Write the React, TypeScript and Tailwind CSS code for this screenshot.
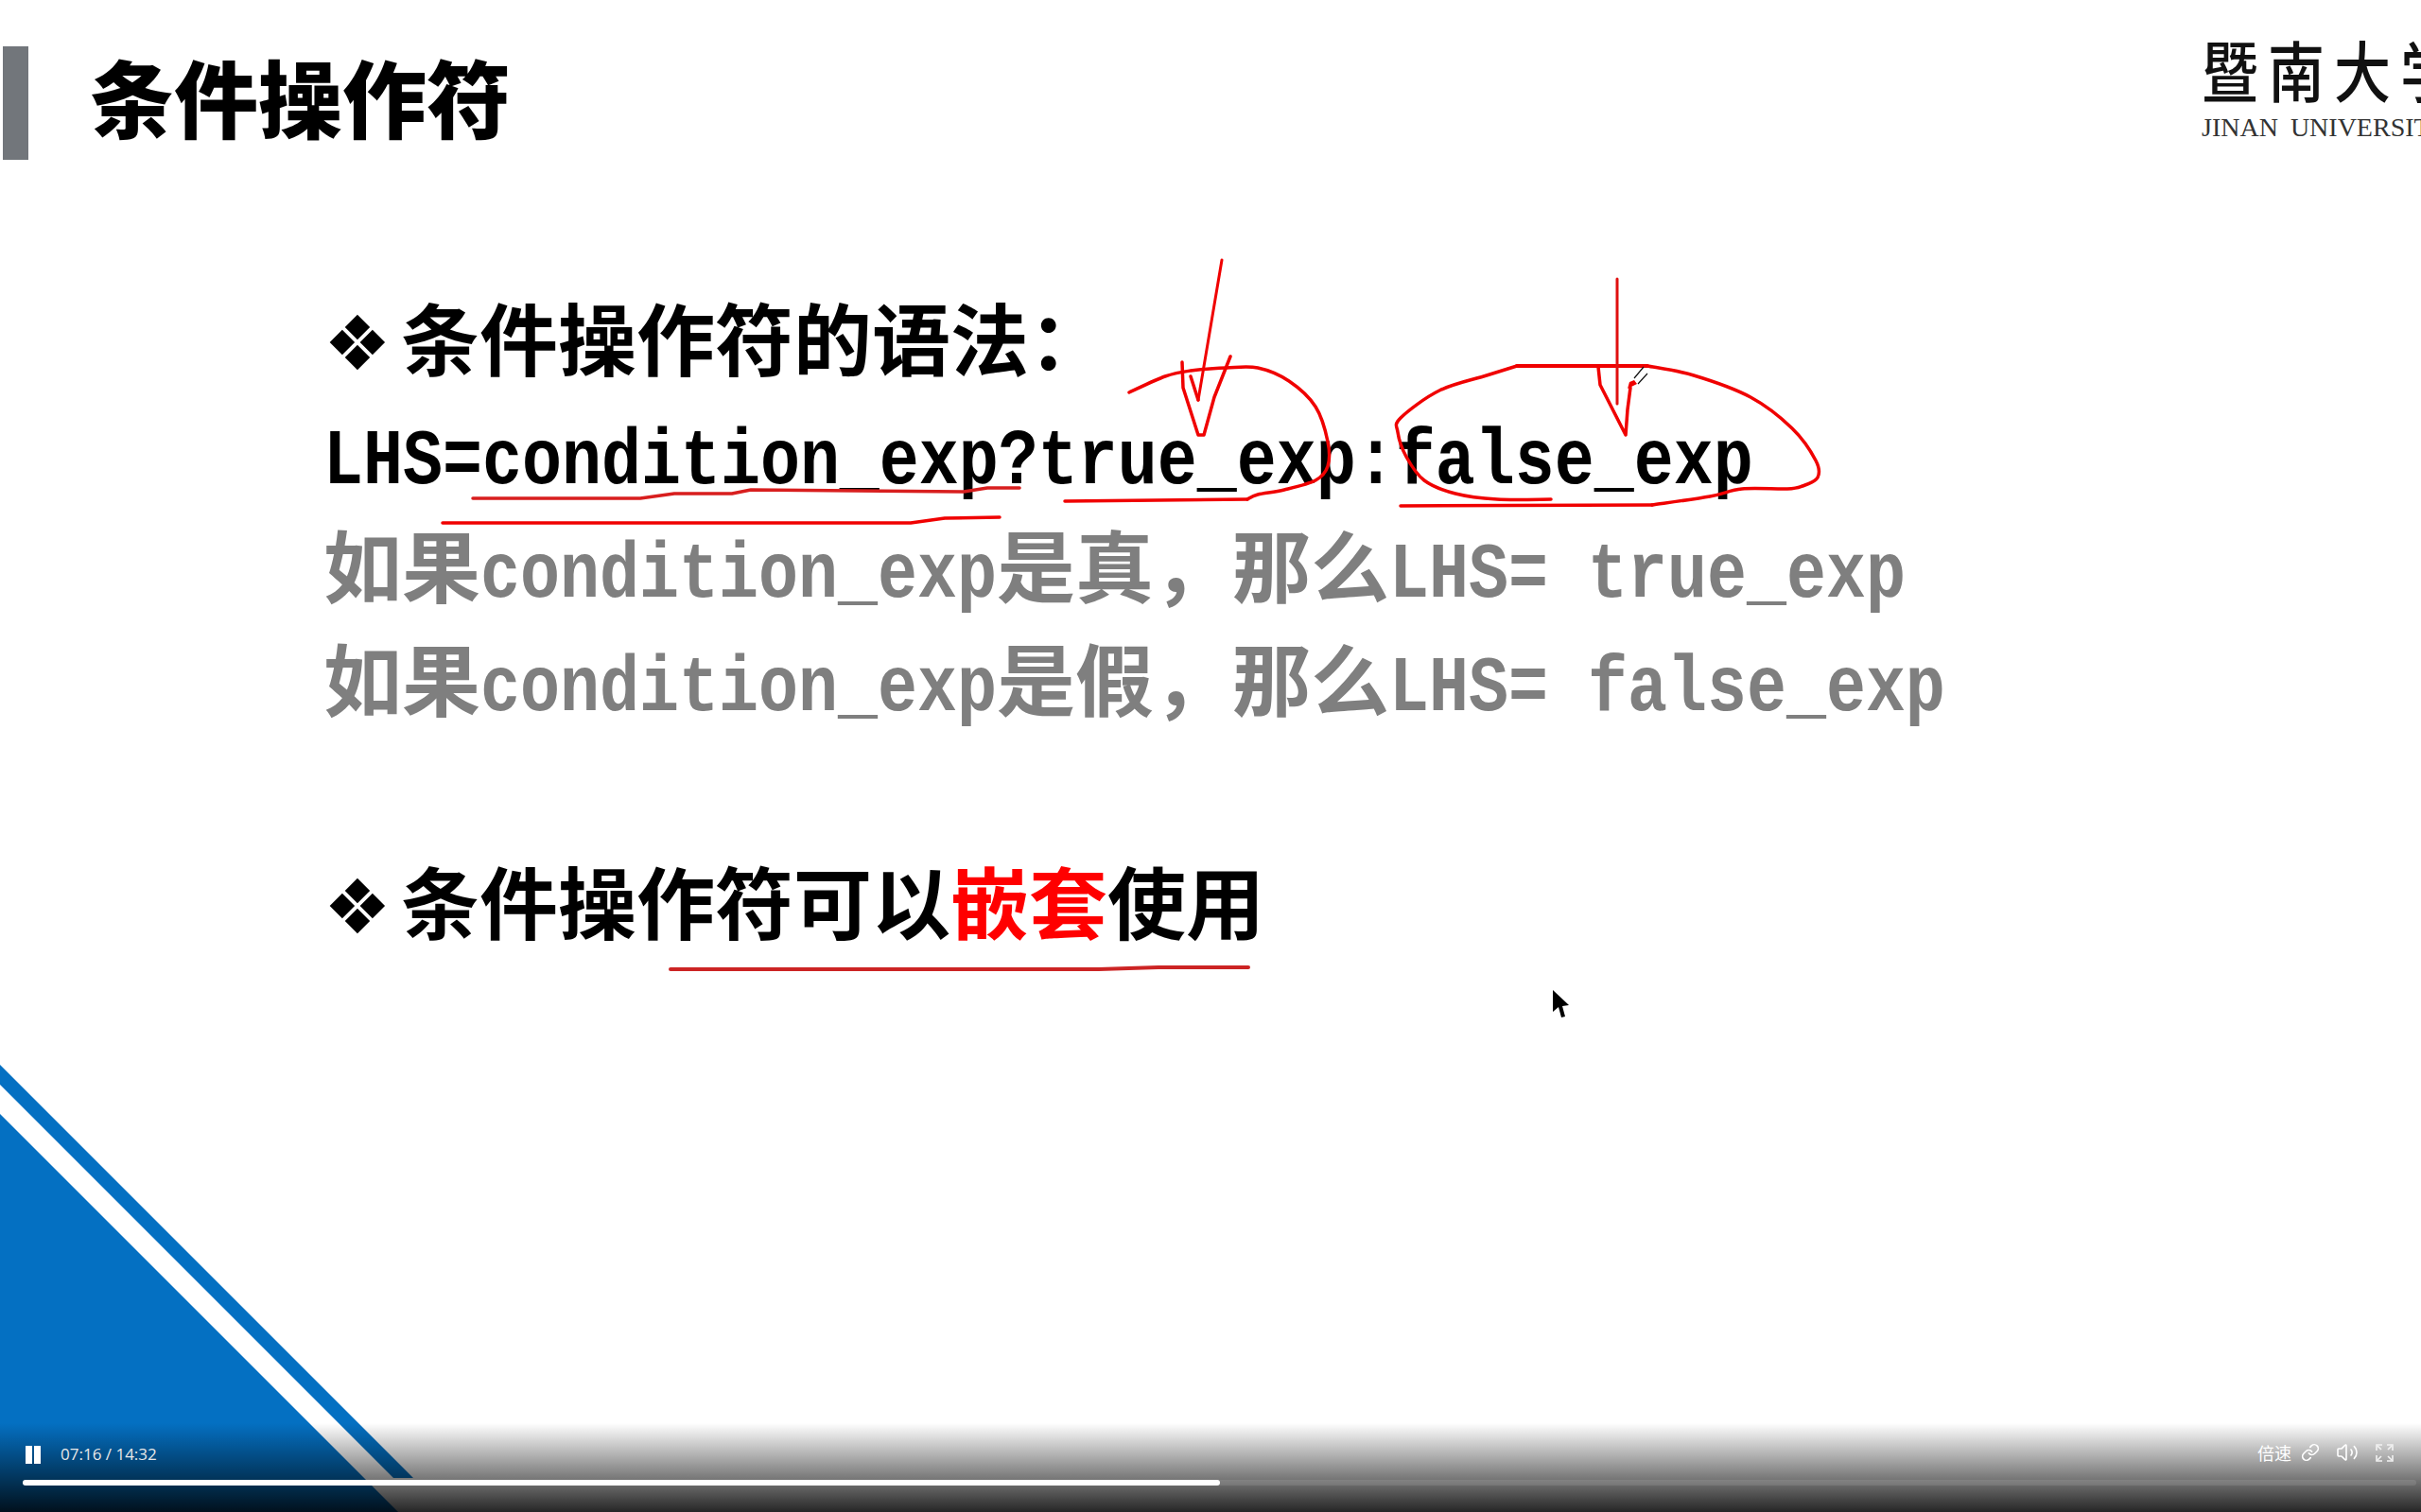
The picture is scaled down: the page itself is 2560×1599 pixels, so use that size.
import { Link, Volume2 } from "lucide-react";

const cjk = "font-['Noto_Sans_CJK_SC',sans-serif]";

// catmull-rom through the hand picked points, so pen strokes do not look like polygons
const smooth = (pts: number[][]) => {
  let d = `M${pts[0][0]} ${pts[0][1]}`;
  for (let i = 0; i < pts.length - 1; i++) {
    const p0 = pts[i - 1] ?? pts[i];
    const p1 = pts[i];
    const p2 = pts[i + 1];
    const p3 = pts[i + 2] ?? p2;
    const c1x = p1[0] + (p2[0] - p0[0]) / 6;
    const c1y = p1[1] + (p2[1] - p0[1]) / 6;
    const c2x = p2[0] - (p3[0] - p1[0]) / 6;
    const c2y = p2[1] - (p3[1] - p1[1]) / 6;
    d += `C${c1x} ${c1y} ${c2x} ${c2y} ${p2[0]} ${p2[1]}`;
  }
  return d;
};

const circleOne = [
  [1194, 415], [1232, 398], [1259, 392], [1297, 389], [1330, 389], [1363, 403], [1391, 430],
  [1404, 467], [1404, 493], [1391, 508], [1358, 518], [1330, 523], [1319, 528],
];
const circleTwo = [
  [1640, 528], [1583, 528], [1539, 522], [1506, 508], [1487, 483], [1478, 457], [1481, 442],
  [1522, 413], [1572, 397], [1604, 387],
];
const circleTwoEnd = [
  [1742, 387], [1791, 397], [1851, 420], [1895, 453], [1920, 487], [1922, 505], [1906, 514],
  [1890, 517], [1842, 517], [1808, 525], [1747, 534],
];

// half-width text: the slide font is narrow, 42px per character
const Mono = ({ children }: { children: string }) => (
  <span
    className="inline-block origin-left scale-x-[0.833] whitespace-pre font-['Liberation_Mono',monospace] text-[84px] font-bold"
    style={{ width: children.length * 42 }}
  >
    {children}
  </span>
);

const Bullet = () => (
  <span className="w-[82px] font-['DejaVu_Sans',sans-serif] text-[80px] leading-[120px] text-black">❖</span>
);

const InkLayer = () => (
  <svg className="absolute inset-0 pointer-events-none" width="2560" height="1599" viewBox="0 0 2560 1599" fill="none">
    <g stroke="#f00000" strokeWidth="3.5" strokeLinecap="round" strokeLinejoin="round">
      <path d="M500 527L677 527L713 522L774 522L794 518L1019 520L1044 516L1078 516" stroke="#d81e1e" />
      <path d="M468 553L963 553L999 548L1057 547" />
      <path d="M1292 275L1267 423" strokeWidth="3" />
      <path d="M1250 383L1251 410L1267 460L1273 460L1284 420L1301 377" />
      <path d="M1259 398L1267 423" />
      <path d={smooth(circleOne)} />
      <path d="M1319 528L1126 530" />
      <path d={smooth(circleTwo)} />
      <path d="M1604 387L1742 387" strokeWidth="4" />
      <path d={smooth(circleTwoEnd)} />
      <path d="M1747 534L1481 535" />
      <path d="M1710 295L1710 427" strokeWidth="3" stroke="#e01010" />
      <path d="M1690 388L1692 407L1719 460L1721 433L1724 410" />
      <path d="M709 1025L1162 1025L1225 1023L1320 1023" stroke="#cc2424" strokeWidth="4" />
    </g>
    {/* pen cursor */}
    <path d="M1728 400L1738 388M1732 406L1742 395" stroke="#111" strokeWidth="1.2" />
    <polygon points="1721,411 1723,404 1728,402 1731,406" fill="#f00000" />
    {/* mouse pointer */}
    <path d="M1642 1047L1642 1070L1648 1065L1651 1076L1655 1075L1652 1064L1659 1063Z" fill="#000" />
  </svg>
);

const SlideCorner = () => (
  <svg className="absolute inset-0 pointer-events-none" width="2560" height="1599" viewBox="0 0 2560 1599">
    <polygon points="0,1178 421,1599 0,1599" fill="#0470c2" />
    <polygon points="0,1126 437,1563 416,1563 0,1147" fill="#0470c2" />
  </svg>
);

const FullscreenIcon = () => (
  <svg width="19" height="19" viewBox="0 0 19 19" fill="none" stroke="#f2f2f2" strokeWidth="1.6">
    <path d="M7 1H1V7M12 1H18V7M18 12V18H12M7 18H1V12" />
    <path d="M2 2L6 6M17 2L13 6M17 17L13 13M2 17L6 13" />
  </svg>
);

const PlayerBar = () => (
  <div className="absolute bottom-0 left-0 right-0 h-[94px] bg-linear-to-b from-transparent to-black/85">
    <div className="flex h-[60px] items-end justify-between pb-[17px] pl-[27px] pr-[29px] text-[17px] leading-[20px] text-[#e8e8e8]">
      <div className="flex items-center gap-[21px]">
        <div className="flex gap-[2px]">
          <div className="h-[19px] w-[7px] bg-white" />
          <div className="h-[19px] w-[7px] bg-white" />
        </div>
        <span className="font-['Open_Sans',sans-serif]">07:16 / 14:32</span>
      </div>
      <div className="flex items-center text-white">
        <span className={`text-[18px] ${cjk}`}>倍速</span>
        <Link className="ml-[10px] h-[20px] w-[20px]" strokeWidth={2} />
        <Volume2 className="ml-[17px] h-[24px] w-[24px]" strokeWidth={1.6} />
        <div className="ml-[18px] flex">
          <FullscreenIcon />
        </div>
      </div>
    </div>
    <div className="ml-[24px] mr-[5px] h-[6px] rounded-full bg-white/10">
      <div className="h-full w-[1266px] rounded-full bg-white" />
    </div>
  </div>
);

export default function App() {
  return (
    <div className={`relative h-[1599px] w-[2560px] overflow-hidden bg-white text-black ${cjk}`}>
      <SlideCorner />

      <header className="flex h-[169px] items-start justify-between">
        <div className="flex items-start">
          <div className="ml-[3px] mt-[49px] h-[120px] w-[27px] bg-[#72767b]" />
          <h1 className="ml-[65px] mt-[51px] text-[89px] font-black leading-[100px]">条件操作符</h1>
        </div>
        <div className="mt-[30px] w-[232px] overflow-hidden">
          <div className="origin-top scale-y-[1.18] whitespace-nowrap text-[60px] font-medium leading-[72px] tracking-[10px] text-[#111]">暨南大学</div>
          <div className="mt-[21px] whitespace-nowrap font-['Liberation_Serif',serif] text-[28px] leading-[24px] text-[#333] [word-spacing:6px]">JINAN UNIVERSITY</div>
        </div>
      </header>

      <main className="mt-[126px] flex flex-col pl-[342px] text-[83px] font-bold leading-[120px]">
        <div className="flex h-[120px] items-baseline">
          <Bullet />
          <span>条件操作符的语法：</span>
        </div>
        <div className="flex h-[120px] items-baseline pt-[14px]">
          <Mono>LHS=condition_exp?true_exp:false_exp</Mono>
        </div>
        <div className="flex h-[120px] items-baseline text-[#7f7f7f]">
          <span>如果</span>
          <Mono>condition_exp</Mono>
          <span>是真，那么</span>
          <Mono>LHS= true_exp</Mono>
        </div>
        <div className="flex h-[120px] items-baseline text-[#7f7f7f]">
          <span>如果</span>
          <Mono>condition_exp</Mono>
          <span>是假，那么</span>
          <Mono>LHS= false_exp</Mono>
        </div>
        <div className="mt-[116px] flex h-[120px] items-baseline">
          <Bullet />
          <span>条件操作符可以</span>
          <span className="text-[#ff0000]">嵌套</span>
          <span>使用</span>
        </div>
      </main>

      <InkLayer />
      <PlayerBar />
    </div>
  );
}
